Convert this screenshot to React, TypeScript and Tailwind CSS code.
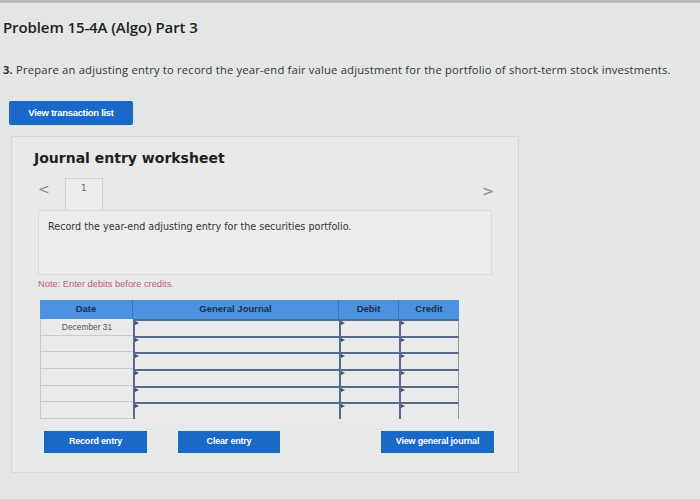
import React from "react";

const rows = [0, 1, 2, 3, 4, 5];

function InputCell({ last }: { last?: boolean }) {
  return (
    <div
      className={
        "relative h-[16.7px] border-t-2 border-l-2 border-[#566a8c] bg-[#e9ebeb] " +
        (last ? "border-r border-r-[#8d96a4]" : "")
      }
    >
      <span className="absolute left-0 top-0 h-0 w-0 border-y-[2.5px] border-l-[4px] border-y-transparent border-l-[#3b5478]" />
    </div>
  );
}

export default function App() {
  return (
    <div
      className="h-[499px] w-[700px] overflow-hidden border-t-[3px] border-[#b9bcbe] bg-[#e4e6e5] text-[#222]"
      style={{ fontFamily: '"Open Sans", "Liberation Sans", sans-serif' }}
    >
      <h1 className="pl-[3px] pt-[14px] text-[15px] font-semibold leading-[20px] tracking-[-0.1px] text-[#1e1e1e]">
        Problem 15-4A (Algo) Part 3
      </h1>

      <p className="mt-[26px] pl-[3px] text-[11.2px] leading-[14px] tracking-[0.2px] text-[#333]">
        <span className="font-bold">3.</span> Prepare an adjusting entry to record the year-end fair value adjustment for
        the portfolio of short-term stock investments.
      </p>

      <button
        type="button"
        className="ml-[9px] mt-[24px] flex h-[24px] w-[124px] items-center justify-center rounded-[2px] bg-[#1b69c6] text-[9.5px] font-bold tracking-[-0.3px] text-white"
        style={{ fontFamily: '"Liberation Sans", Arial, sans-serif' }}
      >
        View transaction list
      </button>

      <div className="ml-[11px] mt-[11px] flex h-[337px] w-[508px] flex-col border border-[#d6d8d8] bg-[#e8e9e9] pl-[22px]">
        <h2
          className="mt-[11px] text-[14px] font-bold leading-[20px] text-[#1f1f1f]"
          style={{ fontFamily: '"DejaVu Sans", Verdana, sans-serif' }}
        >
          Journal entry worksheet
        </h2>

        <div
          className="mt-[10px] flex h-[32px] w-[462px] items-end"
          style={{ fontFamily: '"DejaVu Sans", Verdana, sans-serif' }}
        >
          <span className="mb-[14px] ml-[4px] text-[14px] leading-none text-[#888]">&lt;</span>
          <div className="ml-[15px] flex h-[32px] w-[38px] items-start justify-center border border-b-0 border-[#cfd1d1] bg-[#ececec] pt-[4px] text-[8px] text-[#555]">
            1
          </div>
          <span className="mb-[12px] ml-auto mr-[2px] text-[14px] leading-none text-[#888]">&gt;</span>
        </div>

        <div
          className="ml-[4px] h-[65px] w-[454px] border border-[#d8dada] bg-[#ececec] pl-[9px] pt-[9px] text-[9.6px] text-[#333]"
          style={{ fontFamily: '"DejaVu Sans", Verdana, sans-serif' }}
        >
          Record the year-end adjusting entry for the securities portfolio.
        </div>

        <p
          className="ml-[4px] mt-[3px] text-[9.3px] leading-[12px] text-[#c45c72]"
          style={{ fontFamily: '"Liberation Sans", Arial, sans-serif' }}
        >
          Note: Enter debits before credits.
        </p>

        <div
          className="ml-[6px] mt-[10px] grid w-[419px] grid-cols-[93px_206px_60px_60px]"
          style={{ fontFamily: '"Liberation Sans", Arial, sans-serif' }}
        >
          <div className="flex h-[19px] items-center justify-center border-r border-[#3b74bf] bg-[#4d92e0] text-[9.5px] font-bold text-[#1d2f48]">
            Date
          </div>
          <div className="flex h-[19px] items-center justify-center border-r border-[#3b74bf] bg-[#4d92e0] text-[9.5px] font-bold text-[#1d2f48]">
            General Journal
          </div>
          <div className="flex h-[19px] items-center justify-center border-r border-[#3b74bf] bg-[#4d92e0] text-[9.5px] font-bold text-[#1d2f48]">
            Debit
          </div>
          <div className="flex h-[19px] items-center justify-center bg-[#4d92e0] text-[9.5px] font-bold text-[#1d2f48]">
            Credit
          </div>

          {rows.map((r) => (
            <React.Fragment key={r}>
              <div className="flex h-[16.7px] items-center justify-center border-b border-l border-[#c8cacb] bg-[#e9eaea] text-[8.4px] text-[#555]">
                {r === 0 ? "December 31" : ""}
              </div>
              <InputCell />
              <InputCell />
              <InputCell last />
            </React.Fragment>
          ))}
        </div>

        <div
          className="mt-[12px] flex w-[460px] items-center"
          style={{ fontFamily: '"Liberation Sans", Arial, sans-serif' }}
        >
          <button
            type="button"
            className="ml-[10px] flex h-[22px] w-[103px] items-center justify-center bg-[#1b69c6] text-[9px] font-bold tracking-[-0.2px] text-white"
          >
            Record entry
          </button>
          <button
            type="button"
            className="ml-[31px] flex h-[22px] w-[102px] items-center justify-center bg-[#1b69c6] text-[9px] font-bold tracking-[-0.2px] text-white"
          >
            Clear entry
          </button>
          <button
            type="button"
            className="ml-auto flex h-[22px] w-[113px] items-center justify-center bg-[#1b69c6] text-[9px] font-bold tracking-[-0.2px] text-white"
          >
            View general journal
          </button>
        </div>
      </div>
    </div>
  );
}
